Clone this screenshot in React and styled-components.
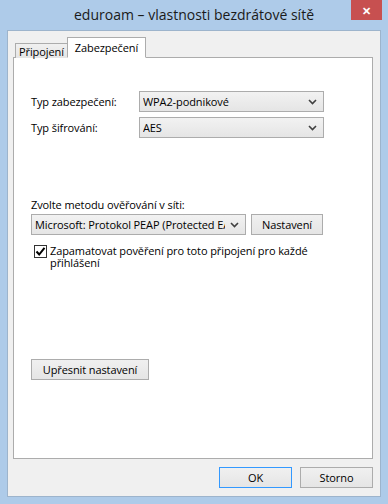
import React from "react";
import { styled, createGlobalStyle } from "styled-components";

const GlobalStyle = createGlobalStyle`
  html, body {
    margin: 0;
    padding: 0;
    background: #aecbe9;
  }
  body {
    font-family: "Open Sans", "Noto Sans", sans-serif;
    font-size: 11px;
    letter-spacing: -0.1px;
    color: #000;
  }
`;

const Chevron = () => (
  <svg width="9" height="6" viewBox="0 0 9 6">
    <path d="M1 1 L4.5 4.5 L8 1" fill="none" stroke="#404040" strokeWidth="1.6" />
  </svg>
);

const Check = () => (
  <svg width="11" height="11" viewBox="0 0 11 11">
    <path d="M1.5 5.5 L4.2 8.5 L9.5 1.8" fill="none" stroke="#000" strokeWidth="2" />
  </svg>
);

const App = () => {
  return (
    <Window>
      <GlobalStyle />
      <TitleBar>
        <span />
        <Title>eduroam – vlastnosti bezdrátové sítě</Title>
        <CloseButton>✕</CloseButton>
      </TitleBar>
      <Body>
        <Tabs>
          <Tab>Připojení</Tab>
          <Tab $active>Zabezpečení</Tab>
        </Tabs>
        <Panel>
          <FormGrid>
            <Label>Typ zabezpečení:</Label>
            <Combo>
              <ComboText>WPA2-podnikové</ComboText>
              <Chevron />
            </Combo>
            <Label>Typ šifrování:</Label>
            <Combo>
              <ComboText>AES</ComboText>
              <Chevron />
            </Combo>
          </FormGrid>

          <MethodBlock>
            <Label>Zvolte metodu ověřování v síti:</Label>
            <MethodRow>
              <Combo $wide>
                <ComboText>Microsoft: Protokol PEAP (Protected EAP)</ComboText>
                <Chevron />
              </Combo>
              <Button $w={72}>Nastavení</Button>
            </MethodRow>
            <CheckRow>
              <CheckBox>
                <Check />
              </CheckBox>
              <CheckText>
                Zapamatovat pověření pro toto připojení pro každé přihlášení
              </CheckText>
            </CheckRow>
          </MethodBlock>

          <Button $w={118}>Upřesnit nastavení</Button>
        </Panel>
        <Footer>
          <Button $w={73} $default>OK</Button>
          <Button $w={73}>Storno</Button>
        </Footer>
      </Body>
    </Window>
  );
};

const Window = styled.div`
  width: 388px;
  height: 504px;
  display: flex;
  flex-direction: column;
  background: #aecbe9;
`;

const TitleBar = styled.div`
  height: 30px;
  display: grid;
  grid-template-columns: 37px 1fr 37px;
  align-items: start;
`;

const Title = styled.div`
  text-align: center;
  font-size: 14px;
  letter-spacing: 0;
  line-height: 30px;
  color: #1a1a1a;
`;

const CloseButton = styled.div`
  width: 31px;
  height: 20px;
  background: #c75050;
  color: #fff;
  font-size: 11px;
  font-weight: bold;
  display: flex;
  align-items: center;
  justify-content: center;
`;

const Body = styled.div`
  flex: 1;
  margin: 0 7px 7px 7px;
  border: 1px solid #9db4cc;
  background: #f0f0f0;
  padding: 6px 7px 8px 5px;
  display: flex;
  flex-direction: column;
`;

const Tabs = styled.div`
  display: flex;
  align-items: flex-end;
  padding-left: 2px;
  height: 21px;
  position: relative;
  z-index: 1;
  margin-bottom: -1px;
`;

const Tab = styled.div`
  height: ${({ $active }) => ($active ? "21px" : "15px")};
  padding: 0 ${({ $active }) => ($active ? "7px" : "3px")};
  margin-left: ${({ $active }) => ($active ? "-1px" : "0")};
  border: 1px solid #acacac;
  border-bottom: ${({ $active }) => ($active ? "1px solid #fff" : "none")};
  background: ${({ $active }) => ($active ? "#fff" : "linear-gradient(#f0f0f0, #e5e5e5)")};
  display: flex;
  align-items: center;
  box-sizing: border-box;
  line-height: 1;
`;

const Panel = styled.div`
  height: 402px;
  box-sizing: border-box;
  border: 1px solid #acacac;
  background: #fff;
  padding: 33px 0 0 17px;
  display: flex;
  flex-direction: column;
  align-items: flex-start;
`;

const FormGrid = styled.div`
  display: grid;
  grid-template-columns: 108px 185px;
  row-gap: 5px;
  align-items: center;
`;

const Label = styled.div`
  white-space: nowrap;
`;

const Combo = styled.div`
  width: ${({ $wide }) => ($wide ? "215px" : "185px")};
  height: 21px;
  box-sizing: border-box;
  border: 1px solid #acacac;
  background: linear-gradient(#f2f2f2, #e5e5e5);
  display: flex;
  align-items: center;
  padding: 0 6px 0 3px;
  gap: 5px;
`;

const ComboText = styled.span`
  flex: 1;
  overflow: hidden;
  white-space: nowrap;
`;

const MethodBlock = styled.div`
  margin-top: 59px;
  display: flex;
  flex-direction: column;
  gap: 2px;
  margin-bottom: 90px;
`;

const MethodRow = styled.div`
  display: flex;
  gap: 5px;
`;

const Button = styled.div`
  width: ${({ $w }) => $w}px;
  height: 21px;
  box-sizing: border-box;
  border: 1px solid ${({ $default }) => ($default ? "#3399ff" : "#acacac")};
  background: linear-gradient(#f0f0f0, #e5e5e5);
  display: flex;
  align-items: center;
  justify-content: center;
  white-space: nowrap;
`;

const CheckRow = styled.div`
  display: flex;
  align-items: flex-start;
  gap: 3px;
  margin-top: 8px;
  padding-left: 3px;
`;

const CheckBox = styled.div`
  width: 13px;
  height: 13px;
  box-sizing: border-box;
  border: 1px solid #333;
  background: #fff;
  display: flex;
  align-items: center;
  justify-content: center;
  margin-top: 0;
`;

const CheckText = styled.div`
  width: 275px;
  line-height: 12px;
`;

const Footer = styled.div`
  display: flex;
  justify-content: flex-end;
  gap: 8px;
  margin-top: 8px;
  padding-right: 0;
`;

export default App;
